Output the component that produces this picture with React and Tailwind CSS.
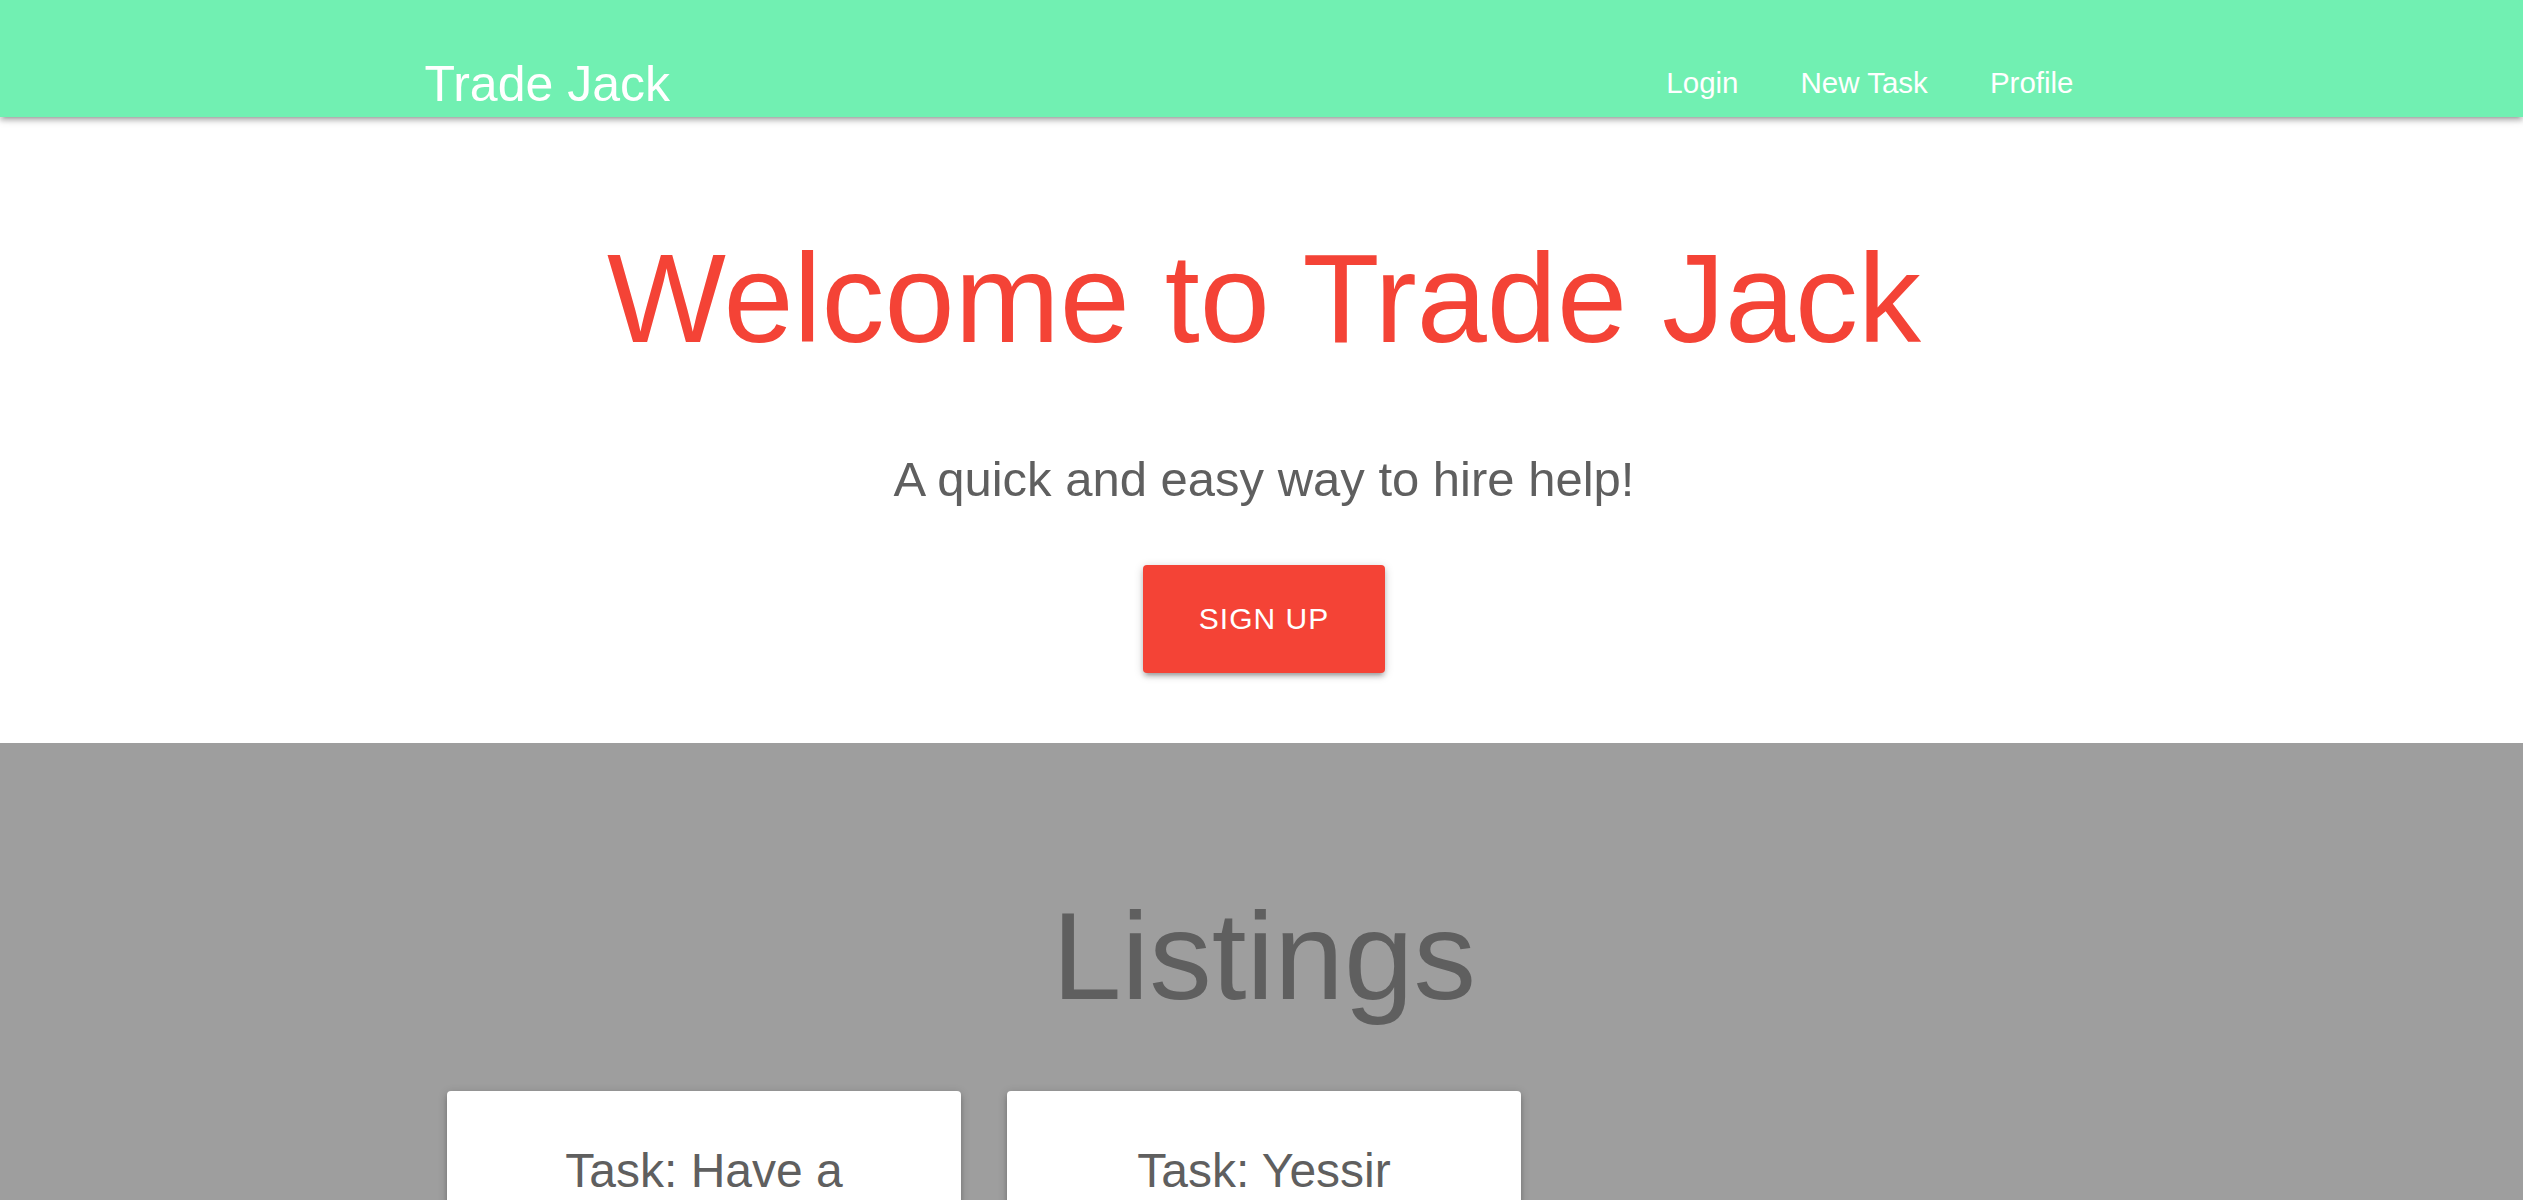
import React from 'react'

const listings = [
  { id: 1, title: 'Task: Have a conversation' },
  { id: 2, title: 'Task: Yessir' },
]

function Navbar() {
  const links = ['Login', 'New Task', 'Profile']

  return (
    <nav className="relative z-10 h-[117px] bg-[#71f0b2] shadow-[0_4px_4px_0_rgba(0,0,0,0.14),0_5px_2px_-4px_rgba(0,0,0,0.12),0_2px_9px_0_rgba(0,0,0,0.2)]">
      <div className="mx-auto flex w-[1686px] items-start justify-between">
        <a href="#" className="ml-[6px] mt-[59px] text-[50px] leading-none text-white">
          Trade Jack
        </a>
        <ul className="mt-[68px] flex">
          {links.map((link) => (
            <li key={link}>
              <a href="#" className="px-[31px] text-[29.5px] leading-none text-white">
                {link}
              </a>
            </li>
          ))}
        </ul>
      </div>
    </nav>
  )
}

function Hero() {
  return (
    <section className="bg-white pl-[5px] pt-[119px] pb-[70px] text-center">
      <h1 className="text-[126px] leading-none text-[#f44336]">Welcome to Trade Jack</h1>
      <p className="mt-[93px] text-[49px] leading-none text-[#5f5f5f]">A quick and easy way to hire help!</p>
      <div className="mt-[61px] flex justify-center">
        <button className="flex h-[108px] items-center rounded-[4px] bg-[#f44336] px-[56px] text-[30px] leading-none tracking-[1px] text-white shadow-[0_4px_4px_0_rgba(0,0,0,0.14),0_6px_2px_-4px_rgba(0,0,0,0.12),0_2px_10px_0_rgba(0,0,0,0.2)]">
          SIGN UP
        </button>
      </div>
    </section>
  )
}

function Listings() {
  return (
    <section className="min-h-[600px] bg-[#9e9e9e] pl-[5px] pt-[150px]">
      <h2 className="text-center text-[125px] leading-none text-[#5f5f5f]">Listings</h2>
      <div className="mx-auto mt-[73px] grid w-[1680px] grid-cols-3">
        {listings.map((item) => (
          <div key={item.id} className="px-[23px]">
            <div className="rounded-[4px] bg-white px-[48px] pt-[51px] pb-[48px] text-center shadow-[0_4px_4px_0_rgba(0,0,0,0.14),0_6px_2px_-4px_rgba(0,0,0,0.12),0_2px_10px_0_rgba(0,0,0,0.2)]">
              <h3 className="text-[48px] leading-[1.2] text-[#5f5f5f]">{item.title}</h3>
            </div>
          </div>
        ))}
      </div>
    </section>
  )
}

export default function App() {
  return (
    <div className="min-h-screen bg-white font-['Liberation_Sans',Arial,sans-serif]">
      <Navbar />
      <Hero />
      <Listings />
    </div>
  )
}
